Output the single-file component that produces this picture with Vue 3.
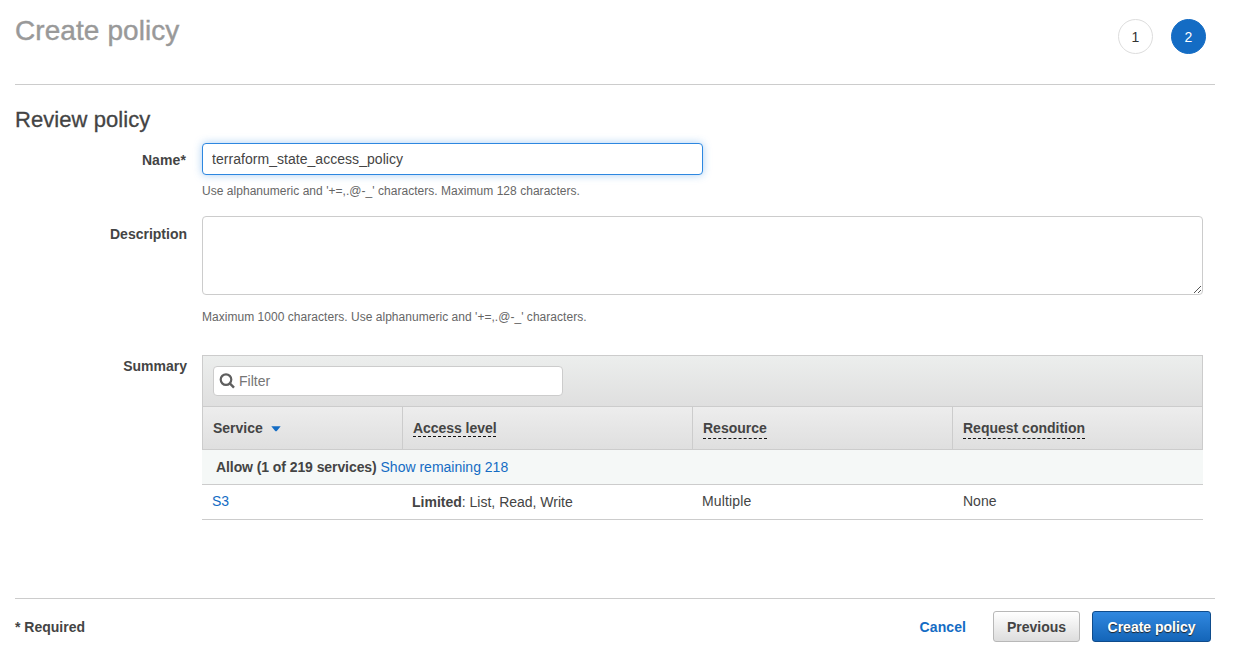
<script setup>
import { ref } from 'vue'

const name = ref('terraform_state_access_policy')
const description = ref('')
const filter = ref('')
const steps = [1, 2]
const current = 2
</script>

<template>
  <main class="page">
    <header class="top">
      <h1>Create policy</h1>
      <ol class="steps">
        <li v-for="s in steps" :key="s" :class="{ active: s === current }">{{ s }}</li>
      </ol>
    </header>

    <section class="review">
      <h2>Review policy</h2>

      <div class="field name">
        <label for="name">Name*</label>
        <div>
          <input id="name" v-model="name" class="text" type="text" />
          <p class="hint">Use alphanumeric and '+=,.@-_' characters. Maximum 128 characters.</p>
        </div>
      </div>

      <div class="field description">
        <label for="description">Description</label>
        <div>
          <div class="area">
            <textarea id="description" v-model="description"></textarea>
            <svg class="grip" width="8" height="8" viewBox="0 0 8 8" shape-rendering="crispEdges">
              <path d="M0.5 7.5L7.5 0.5M4.5 7.5L7.5 4.5" stroke="#555" stroke-width="1" fill="none" />
            </svg>
          </div>
          <p class="hint">Maximum 1000 characters. Use alphanumeric and '+=,.@-_' characters.</p>
        </div>
      </div>

      <div class="field summary">
        <label>Summary</label>
        <div class="table">
          <div class="filterbar">
            <div class="filter">
              <svg width="16" height="16" viewBox="0 0 16 16" fill="none" stroke="#5f5f5f">
                <circle cx="7" cy="6.6" r="5.3" stroke-width="2.2" />
                <path d="M10.8 10.4L15 14.6" stroke-width="2.4" />
              </svg>
              <input v-model="filter" type="text" placeholder="Filter" />
            </div>
          </div>
          <div class="row head">
            <div>
              <span>Service</span>
              <svg class="sort" width="10" height="6" viewBox="0 0 10 6"><path d="M0.3 0.3H9.7L6 4.7Q5 5.8 4 4.7Z" fill="#146cc4" /></svg>
            </div>
            <div><span class="tip near">Access level</span></div>
            <div><span class="tip">Resource</span></div>
            <div><span class="tip">Request condition</span></div>
          </div>
          <div class="group"><b>Allow (1 of 219 services)</b> <a>Show remaining 218</a></div>
          <div class="row data">
            <div><a>S3</a></div>
            <div class="access"><b>Limited</b>: List, Read, Write</div>
            <div class="resource">Multiple</div>
            <div class="condition">None</div>
          </div>
        </div>
      </div>
    </section>

    <footer class="bottom">
      <span class="required">* Required</span>
      <a class="cancel">Cancel</a>
      <button class="btn previous">Previous</button>
      <button class="btn primary">Create policy</button>
    </footer>
  </main>
</template>

<style>
body {
  margin: 0;
  background: #fff;
  overflow: hidden;
}
</style>

<style scoped>
* {
  box-sizing: border-box;
}
.page {
  height: 662px;
  padding: 0 20px 0 15px;
  display: flex;
  flex-direction: column;
  font: 14px/20px "Liberation Sans", Arial, sans-serif;
  color: #444;
}
h1, h2, p, ol {
  margin: 0;
  padding: 0;
  font-weight: normal;
}
a {
  color: #146cc4;
}
.top {
  display: flex;
  justify-content: space-between;
  height: 85px;
  border-bottom: 1px solid #ccc;
}
h1 {
  padding-top: 14px;
  font-size: 28px;
  line-height: 34px;
  letter-spacing: 0.08px;
  color: #999;
  -webkit-text-stroke: 0.4px #999;
}
.steps {
  display: flex;
  gap: 18px;
  list-style: none;
  padding: 19px 9px 0 0;
}
.steps li {
  width: 35px;
  height: 35px;
  border: 1px solid #ddd;
  border-radius: 50%;
  text-align: center;
  line-height: 35px;
  color: #333;
}
.steps .active {
  background: #146cc4;
  border-color: #146cc4;
  color: #fff;
}
.review {
  height: 513px;
}
h2 {
  height: 58px;
  padding-top: 22px;
  font-size: 22px;
  line-height: 26px;
  letter-spacing: 0.06px;
  -webkit-text-stroke: 0.3px #444;
}
.field {
  display: grid;
  grid-template-columns: 172px 1001px;
  column-gap: 15px;
}
.field > label {
  text-align: right;
  font-weight: bold;
}
.name { height: 73px; }
.description { height: 139px; }
.name > label {
  padding: 7px 1px 0 0;
  letter-spacing: 0.1px;
}
.description > label { padding-top: 8px; }
.summary > label { padding-top: 1px; }
.text {
  display: block;
  width: 501px;
  height: 32px;
  padding: 0 9px;
  border: 1px solid #2d87e0;
  border-radius: 4px;
  outline: none;
  box-shadow: 0 0 8px rgba(45, 135, 224, 0.4);
  font: inherit;
  letter-spacing: 0.04px;
  color: #444;
}
.hint {
  font-size: 12px;
  line-height: 16px;
  letter-spacing: 0.035px;
  color: #666;
}
.name .hint { margin-top: 8px; }
.description .hint { margin-top: 14px; }
.area {
  position: relative;
  height: 79px;
}
textarea {
  display: block;
  width: 100%;
  height: 100%;
  border: 1px solid #ccc;
  border-radius: 4px;
  resize: none;
  outline: none;
}
.grip {
  position: absolute;
  right: 2px;
  bottom: 1px;
}
.filterbar {
  height: 52px;
  padding: 10px;
  border: 1px solid #ccc;
  background: linear-gradient(#eceeed, #dfdfdf);
}
.filter {
  display: flex;
  align-items: center;
  width: 350px;
  height: 30px;
  padding-left: 5px;
  gap: 4px;
  border: 1px solid #ccc;
  border-radius: 4px;
  background: #fff;
}
.filter input {
  flex: 1;
  min-width: 0;
  padding: 0;
  border: 0;
  outline: 0;
  background: none;
  font: inherit;
  color: #444;
}
.filter input::placeholder {
  color: #757575;
}
.row {
  display: grid;
  grid-template-columns: 200px 290px 260px 251px;
}
.head {
  height: 43px;
  border: 1px solid #ccc;
  border-top: 0;
  background: linear-gradient(#ededed, #dfdfdf);
  font-weight: bold;
  grid-template-columns: 199px 290px 260px 250px;
}
.head > div {
  padding: 11px 0 0 10px;
}
.head > div + div {
  border-left: 1px solid #ccc;
}
.sort {
  margin-left: 4px;
  width: 10px;
  height: 6px;
  margin-left: 8px;
  vertical-align: 1px;
}
.tip {
  display: inline-block;
  height: 21px;
  border-bottom: 1px dashed #111;
}
.near {
  height: 19px;
  letter-spacing: -0.05px;
}
.group {
  height: 35px;
  padding: 7px 0 0 14px;
  border-bottom: 1px solid #ccc;
  background: #f5f8f7;
}
.group b {
  letter-spacing: -0.08px;
}
.data {
  height: 35px;
  border-bottom: 1px solid #ccc;
}
.data > div {
  padding: 6px 0 0 10px;
}
.data .access {
  padding-top: 7px;
}
.data .resource {
  letter-spacing: 0.15px;
}
.data .condition {
  padding-left: 11px;
}
.bottom {
  display: flex;
  align-items: flex-start;
  height: 64px;
  padding: 12px 4px 0 0;
  border-top: 1px solid #ccc;
  font-weight: bold;
}
.required {
  margin: 6px auto 0 0;
}
.cancel {
  margin: 6px 27px 0 0;
  letter-spacing: 0.08px;
}
.btn {
  height: 31px;
  padding: 1px 0 0;
  border: 1px solid #b8b8b8;
  border-radius: 3px;
  background: linear-gradient(#fff, #ddd);
  font: inherit;
  color: #444;
}
.previous {
  width: 87px;
  margin-right: 12px;
}
.primary {
  width: 119px;
  border-color: #0f4c8c;
  background: linear-gradient(#3088e0, #1465b8);
  color: #fff;
  text-shadow: 0 1px 1px #222;
}
</style>
